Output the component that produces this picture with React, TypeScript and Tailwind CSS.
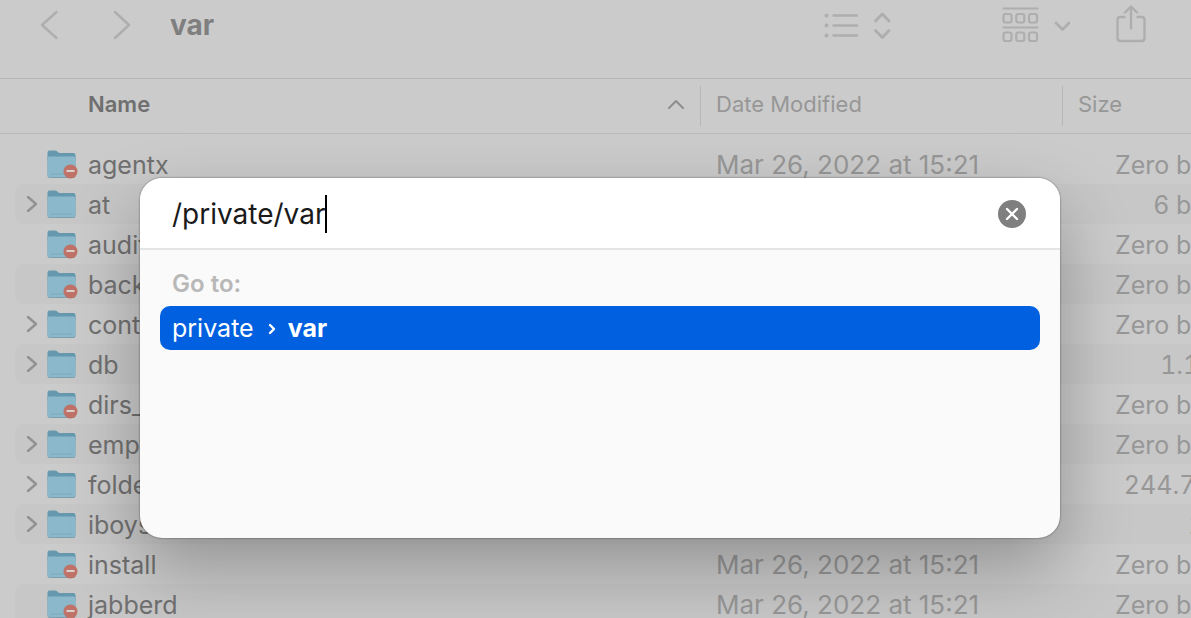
import { useState } from 'react';

interface FileEntry {
    name: string;
    modified: string;
    size: string;
    locked?: boolean;
}

const DATE = 'Mar 26, 2022 at 15:21';

const files: FileEntry[] = [
    { name: 'agentx', modified: DATE, size: 'Zero bytes', locked: true },
    { name: 'at', modified: DATE, size: '6 bytes' },
    { name: 'audit', modified: DATE, size: 'Zero bytes', locked: true },
    { name: 'backups', modified: DATE, size: 'Zero bytes', locked: true },
    { name: 'containers', modified: DATE, size: 'Zero bytes' },
    { name: 'db', modified: DATE, size: '1.1 GB' },
    { name: 'dirs_cleaner', modified: DATE, size: 'Zero bytes', locked: true },
    { name: 'empty', modified: DATE, size: 'Zero bytes' },
    { name: 'folders', modified: DATE, size: '244.7 MB' },
    { name: 'iboysoft', modified: DATE, size: '1 kB' },
    { name: 'install', modified: DATE, size: 'Zero bytes', locked: true },
    { name: 'jabberd', modified: DATE, size: 'Zero bytes', locked: true }
];

function FolderIcon({ locked }: { locked?: boolean }) {
    return (
        <svg width="32" height="30" viewBox="0 0 32 30" className="shrink-0" aria-hidden="true">
            <path d="M0.500 3.500Q0.500 1.500 2.500 1.500H8Q9.200 1.500 10.100 2.300L12 4H26.500Q28.500 4 28.500 6V12H0.500Z" fill="#6799ae" />
            <path d="M0.500 8V26.500Q0.500 29 3 29H26Q28.500 29 28.500 26.500V8Z" fill="#7d9fac" />
            <path d="M0.500 9.500Q0.500 7.500 2.500 7.500H26.500Q28.500 7.500 28.500 9.500V26Q28.500 28 26.500 28H2.500Q0.500 28 0.500 26Z" fill="#8bb8ca" />
            <path d="M3 25H26" stroke="#7dacbf" strokeWidth="1" />
            {locked && (
                <>
                    <circle cx="23.500" cy="22.500" r="7" fill="#bf7268" />
                    <path d="M19.500 22H27.500" stroke="#dccfcc" strokeWidth="2" />
                </>
            )}
        </svg>
    );
}

function Toolbar() {
    return (
        <header className="h-[79px] border-b border-[#b7b7b7]">
            <div className="flex h-[50px] items-center pl-10 text-[#aeaeae]">
                <button type="button" aria-label="Back">
                    <svg width="20" height="30" viewBox="0 0 20 30" fill="none" stroke="currentColor" strokeWidth="2.4" strokeLinecap="round" strokeLinejoin="round">
                        <path d="M16.500 2L2 15L16.500 28" />
                    </svg>
                </button>
                <button type="button" aria-label="Forward" className="ml-[52px]">
                    <svg width="20" height="30" viewBox="0 0 20 30" fill="none" stroke="currentColor" strokeWidth="2.4" strokeLinecap="round" strokeLinejoin="round">
                        <path d="M3 2L17 15L3 28" />
                    </svg>
                </button>
                <h1 className="ml-[38px] text-[28px] font-bold text-[#7f7f7f]">var</h1>

                <button type="button" aria-label="View as list" className="ml-auto">
                    <svg width="68" height="30" viewBox="0 0 68 30" fill="none" stroke="currentColor" strokeWidth="2.4" strokeLinecap="round">
                        <path d="M9.500 5.500H33M9.500 15.500H33M9.500 25.500H33" />
                        <path d="M2.500 5.500h.01M2.500 15.500h.01M2.500 25.500h.01" strokeWidth="4" />
                        <path d="M51.500 11L58.300 4L65 11M51.500 20.500L58.300 27.500L65 20.500" strokeWidth="2.800" strokeLinejoin="round" />
                    </svg>
                </button>
                <button type="button" aria-label="Group" className="ml-[110px]">
                    <svg width="68" height="36" viewBox="0 0 68 36" fill="none" stroke="currentColor" strokeWidth="2.200" strokeLinecap="round">
                        <path d="M1.500 1.500H35.500M1.500 20.500H35.500" />
                        <rect x="1.500" y="7" width="8" height="8.500" rx="2" />
                        <rect x="14.300" y="7" width="8" height="8.500" rx="2" />
                        <rect x="27" y="7" width="8" height="8.500" rx="2" />
                        <rect x="1.500" y="25.500" width="8" height="8.500" rx="2" />
                        <rect x="14.300" y="25.500" width="8" height="8.500" rx="2" />
                        <rect x="27" y="25.500" width="8" height="8.500" rx="2" />
                        <path d="M54 16L60.500 22.500L67 16" strokeWidth="2.800" strokeLinejoin="round" />
                    </svg>
                </button>
                <button type="button" aria-label="Share" className="mr-[45px] ml-[46px]">
                    <svg width="30" height="40" viewBox="0 0 30 40" fill="none" stroke="currentColor" strokeWidth="2.400" strokeLinecap="round" strokeLinejoin="round">
                        <path d="M8.500 12H4.500Q1.500 12 1.500 15V33Q1.500 36 4.500 36H25.500Q28.500 36 28.500 33V15Q28.500 12 25.500 12H21.500" />
                        <path d="M15 23.500V2M9 7.500L15 1.500L21 7.500" />
                    </svg>
                </button>
            </div>
        </header>
    );
}

function FileTable() {
    return (
        <table className="w-[calc(100%+68px)] table-fixed border-separate border-spacing-0">
            <thead>
                <tr className="h-[55px] text-left text-[22px] text-[#979797]">
                    <th scope="col" className="border-b border-[#bababa] p-0 pl-[88px] font-semibold text-[#6f6f6f]">
                        <div className="flex h-10 items-center justify-between border-r border-[#b7b7b7] pr-4 pb-1">
                            Name
                            <svg width="18" height="12" viewBox="0 0 18 12" fill="none" stroke="#8e8e8e" strokeWidth="2" strokeLinecap="round" strokeLinejoin="round" aria-hidden="true">
                                <path d="M3 10L10 3L17 10" />
                            </svg>
                        </div>
                    </th>
                    <th scope="col" className="w-[362px] border-b border-[#bababa] p-0 font-normal">
                        <div className="flex h-10 items-center border-r border-[#b7b7b7] pb-1 pl-[15px]">Date Modified</div>
                    </th>
                    <th scope="col" className="w-[196px] border-b border-[#bababa] p-0 pl-[15px] font-normal">
                        <div className="flex h-10 items-center pb-1">Size</div>
                    </th>
                </tr>
            </thead>
            <tbody className="text-[25px] leading-[32px] text-[#979797]">
                <tr aria-hidden="true" className="h-[10px]" />
                {files.map((file, index) => (
                    <tr key={file.name} className="h-10">
                        <td className="p-0 pl-[15px]">
                            <div className={`flex h-10 items-center rounded-l-lg pl-[10px] text-[#707070] ${index % 2 ? 'bg-[#c7c7c7]' : ''}`}>
                                <div className="w-[22px]">
                                    {!file.locked && (
                                        <button type="button" aria-label={`Expand ${file.name}`} className="block">
                                            <svg width="14" height="18" viewBox="0 0 14 18" fill="none" stroke="#929292" strokeWidth="2.400" strokeLinecap="round" strokeLinejoin="round">
                                                <path d="M3 2L11 9L3 16" />
                                            </svg>
                                        </button>
                                    )}
                                </div>
                                <FolderIcon locked={file.locked} />
                                <span className="pt-px pl-[9px]">{file.name}</span>
                            </div>
                        </td>
                        <td className={`p-0 pt-px pl-[15px] text-[26px] whitespace-nowrap ${index % 2 ? 'bg-[#c7c7c7]' : ''}`}>{file.modified}</td>
                        <td className={`p-0 pt-px pr-[18px] text-right whitespace-nowrap tabular-nums ${index % 2 ? 'bg-[#c7c7c7]' : ''}`}>{file.size}</td>
                    </tr>
                ))}
            </tbody>
        </table>
    );
}

function GoToDialog() {
    const [path, setPath] = useState('/private/var');

    return (
        <div
            role="dialog"
            aria-label="Go to folder"
            className="absolute top-[178px] right-[131px] left-[140px] h-[360px] overflow-hidden rounded-[22px] bg-[#fafafa] shadow-[0_0_2px_rgba(0,0,0,0.6),0_30px_70px_rgba(0,0,0,0.28)]"
        >
            <div className="flex h-[72px] items-center border-b-2 border-[#e4e4e4] bg-white pt-[2px] pr-[34px] pl-8">
                <input
                    type="text"
                    aria-label="Folder path"
                    value={path}
                    onChange={(e) => setPath(e.target.value)}
                    className="field-sizing-content text-[28px] text-[#1a1a1a] outline-none"
                />
                {/* Caret */}
                <span className="h-[38px] w-[2px] bg-black" />
                <button
                    type="button"
                    aria-label="Clear"
                    onClick={() => setPath('')}
                    className="ml-auto flex size-7 items-center justify-center rounded-full bg-[#7f7f7f]"
                >
                    <svg width="14" height="14" viewBox="0 0 14 14" stroke="white" strokeWidth="2.400" strokeLinecap="round">
                        <path d="M2 2L12 12M12 2L2 12" />
                    </svg>
                </button>
            </div>
            <div className="px-5 pt-[18px]">
                <h2 className="px-3 text-[24px] leading-[32px] font-semibold text-[#b8b8b8]">Go to:</h2>
                <button type="button" className="mt-[6px] flex h-11 w-full items-center rounded-[10px] bg-[#0060df] px-3 pt-[2px] text-[25px] text-white">
                    private
                    <svg width="10" height="14" viewBox="0 0 10 14" fill="none" stroke="currentColor" strokeWidth="2.400" strokeLinecap="round" strokeLinejoin="round" className="mx-3" aria-hidden="true">
                        <path d="M4 3L8 7L4 11" />
                    </svg>
                    <span className="font-bold">var</span>
                </button>
            </div>
        </div>
    );
}

export default function App() {
    return (
        <main className="relative h-screen overflow-hidden bg-[#cbcbcb] font-['Inter',sans-serif]">
            <Toolbar />
            <FileTable />
            <GoToDialog />
        </main>
    );
}
